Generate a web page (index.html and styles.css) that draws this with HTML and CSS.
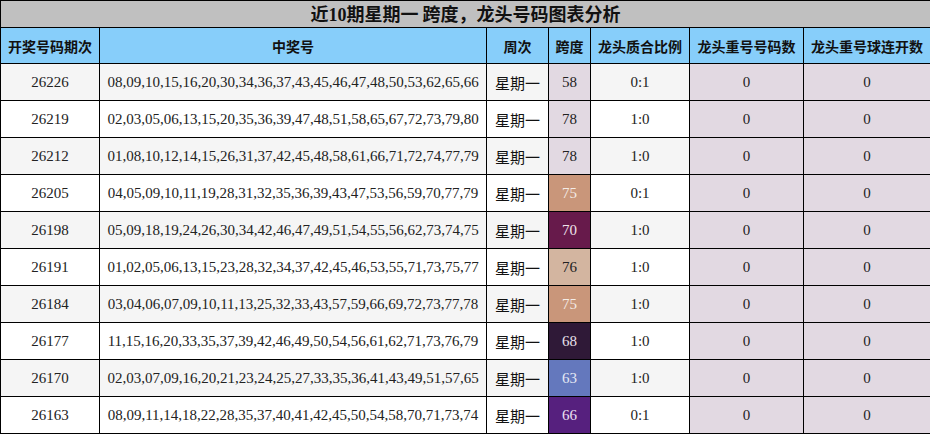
FILE: index.html
```html
<!DOCTYPE html>
<html lang="zh">
<head>
<meta charset="utf-8">
<link rel="stylesheet" href="styles.css">
</head>
<body>
<table class="chart">
  <colgroup>
    <col class="c1"><col class="c2"><col class="c3"><col class="c4"><col class="c5"><col class="c6"><col class="c7">
  </colgroup>
  <thead>
    <tr class="title-row"><th colspan="7" class="title"><span class="num">近10期</span>星期一 跨度，龙头号码图表分析</th></tr>
    <tr class="head-row">
      <th>开奖号码期次</th><th>中奖号</th><th>周次</th><th>跨度</th><th>龙头质合比例</th><th>龙头重号号码数</th><th>龙头重号球连开数</th>
    </tr>
  </thead>
  <tbody>
    <tr class="odd"><td>26226</td><td>08,09,10,15,16,20,30,34,36,37,43,45,46,47,48,50,53,62,65,66</td><td class="cn">星期一</td><td class="span lav">58</td><td>0:1</td><td class="lav">0</td><td class="lav">0</td></tr>
    <tr><td>26219</td><td>02,03,05,06,13,15,20,35,36,39,47,48,51,58,65,67,72,73,79,80</td><td class="cn">星期一</td><td class="span lav">78</td><td>1:0</td><td class="lav">0</td><td class="lav">0</td></tr>
    <tr class="odd"><td>26212</td><td>01,08,10,12,14,15,26,31,37,42,45,48,58,61,66,71,72,74,77,79</td><td class="cn">星期一</td><td class="span lav">78</td><td>1:0</td><td class="lav">0</td><td class="lav">0</td></tr>
    <tr><td>26205</td><td>04,05,09,10,11,19,28,31,32,35,36,39,43,47,53,56,59,70,77,79</td><td class="cn">星期一</td><td class="span s75">75</td><td>0:1</td><td class="lav">0</td><td class="lav">0</td></tr>
    <tr class="odd"><td>26198</td><td>05,09,18,19,24,26,30,34,42,46,47,49,51,54,55,56,62,73,74,75</td><td class="cn">星期一</td><td class="span s70">70</td><td>1:0</td><td class="lav">0</td><td class="lav">0</td></tr>
    <tr><td>26191</td><td>01,02,05,06,13,15,23,28,32,34,37,42,45,46,53,55,71,73,75,77</td><td class="cn">星期一</td><td class="span s76">76</td><td>1:0</td><td class="lav">0</td><td class="lav">0</td></tr>
    <tr class="odd"><td>26184</td><td>03,04,06,07,09,10,11,13,25,32,33,43,57,59,66,69,72,73,77,78</td><td class="cn">星期一</td><td class="span s75">75</td><td>1:0</td><td class="lav">0</td><td class="lav">0</td></tr>
    <tr><td>26177</td><td>11,15,16,20,33,35,37,39,42,46,49,50,54,56,61,62,71,73,76,79</td><td class="cn">星期一</td><td class="span s68">68</td><td>1:0</td><td class="lav">0</td><td class="lav">0</td></tr>
    <tr class="odd"><td>26170</td><td>02,03,07,09,16,20,21,23,24,25,27,33,35,36,41,43,49,51,57,65</td><td class="cn">星期一</td><td class="span s63">63</td><td>1:0</td><td class="lav">0</td><td class="lav">0</td></tr>
    <tr><td>26163</td><td>08,09,11,14,18,22,28,35,37,40,41,42,45,50,54,58,70,71,73,74</td><td class="cn">星期一</td><td class="span s66">66</td><td>0:1</td><td class="lav">0</td><td class="lav">0</td></tr>
  </tbody>
</table>
</body>
</html>
```
FILE: styles.css
```css
html, body {
  margin: 0;
  padding: 0;
  background: #ffffff;
}

.chart {
  border-collapse: collapse;
  table-layout: fixed;
  width: 930px;
  font-family: "Liberation Serif", "Noto Sans CJK SC", serif;
  font-size: 15px;
  color: #222222;
}

.c1 { width: 99px; }
.c2 { width: 387px; }
.c3 { width: 62px; }
.c4 { width: 42px; }
.c5 { width: 99px; }
.c6 { width: 114px; }
.c7 { width: 127px; }

.chart th,
.chart td {
  border: 1px solid #000000;
  padding: 0;
  text-align: center;
  vertical-align: middle;
  white-space: nowrap;
  overflow: hidden;
}

.title-row { height: 27px; }

.title {
  background: #c0c0c0;
  font-family: "Noto Sans CJK SC", sans-serif;
  font-size: 18px;
  font-weight: bold;
  color: #111111;
  border-bottom: 2px solid #000000;
  line-height: 24px;
}

.title .num {
  font-family: "Liberation Serif", "Noto Sans CJK SC", serif;
}

.head-row { height: 36px; }

.head-row th {
  background: #87cefa;
  font-family: "Noto Sans CJK SC", sans-serif;
  font-size: 14px;
  font-weight: bold;
  color: #111111;
}

.chart tbody tr { height: 37px; background: #ffffff; }
.chart tbody tr.odd { background: #f5f5f5; }

.cn {
  font-family: "Noto Sans CJK SC", sans-serif;
  font-size: 15px;
  color: #111111;
}

.chart td.lav { background: #e2d9e2; }

.chart td.s75 { background: #c9967a; color: #f4ece6; }
.chart td.s70 { background: #671a4b; color: #f0e4ec; }
.chart td.s76 { background: #d3b5a0; color: #222222; }
.chart td.s68 { background: #2f1937; color: #e8e0ea; }
.chart td.s63 { background: #6478bd; color: #e4e8f4; }
.chart td.s66 { background: #56207e; color: #ece0f2; }
```
